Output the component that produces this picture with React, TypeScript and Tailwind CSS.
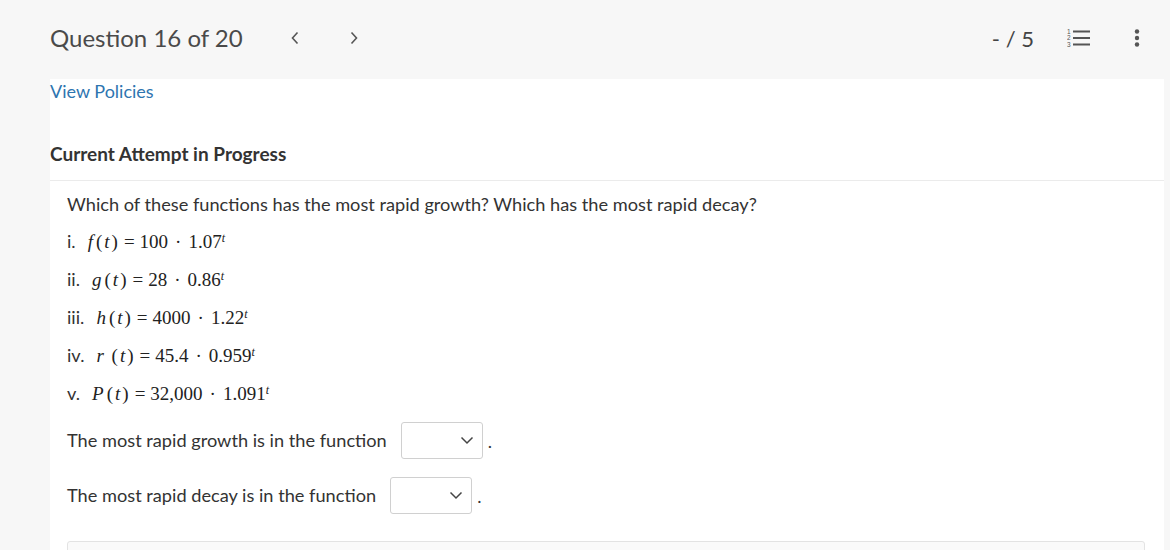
import React from "react"

const lato = { fontFamily: "Lato, 'Open Sans', sans-serif" }

function Chevron({ dir }: { dir: "left" | "right" }) {
  return (
    <svg width="10" height="14" viewBox="0 0 10 14" className="text-[#555]">
      {dir === "left" ? (
        <path d="M7.5 1.5 L2.5 7 L7.5 12.5" fill="none" stroke="currentColor" strokeWidth="1.6" />
      ) : (
        <path d="M2.5 1.5 L7.5 7 L2.5 12.5" fill="none" stroke="currentColor" strokeWidth="1.6" />
      )}
    </svg>
  )
}

function NumberedList() {
  return (
    <svg width="24" height="20" viewBox="0 0 24 20" className="text-[#555]">
      <text x="0" y="5.5" fontSize="6.5" fill="currentColor" fontFamily="Liberation Sans, sans-serif">1</text>
      <text x="0" y="12" fontSize="6.5" fill="currentColor" fontFamily="Liberation Sans, sans-serif">2</text>
      <text x="0" y="18.5" fontSize="6.5" fill="currentColor" fontFamily="Liberation Sans, sans-serif">3</text>
      <rect x="6" y="2.5" width="17" height="2" fill="currentColor" />
      <rect x="6" y="9" width="17" height="2" fill="currentColor" />
      <rect x="6" y="15.5" width="17" height="2" fill="currentColor" />
    </svg>
  )
}

function Kebab() {
  return (
    <svg width="6" height="18" viewBox="0 0 6 18" className="text-[#555]">
      <circle cx="3" cy="2.5" r="2.2" fill="currentColor" />
      <circle cx="3" cy="9" r="2.2" fill="currentColor" />
      <circle cx="3" cy="15.5" r="2.2" fill="currentColor" />
    </svg>
  )
}

function Select() {
  return (
    <span className="inline-flex h-[37px] w-[82px] items-center justify-end rounded-[3px] border border-[#d0d0d0] bg-white pr-[8px] align-middle">
      <svg width="14" height="9" viewBox="0 0 14 9" className="text-[#444]">
        <path d="M1.5 1.5 L7 7 L12.5 1.5" fill="none" stroke="currentColor" strokeWidth="1.5" />
      </svg>
    </span>
  )
}

const items = [
  { label: "i.", name: "f", coef: "100", base: "1.07", gap: "" },
  { label: "ii.", name: "g", coef: "28", base: "0.86", gap: "" },
  { label: "iii.", name: "h", coef: "4000", base: "1.22", gap: "" },
  { label: "iv.", name: "r", coef: "45.4", base: "0.959", gap: " " },
  { label: "v.", name: "P", coef: "32,000", base: "1.091", gap: "" },
]

export default function App() {
  return (
    <div className="min-h-[550px] w-[1170px] bg-[#f7f7f7]" style={lato}>
      <div className="flex h-[79px] items-center pb-[3px] pl-[50px] pr-[30px]">
        <span className="text-[24px] text-[#4a4a4a]">Question 16 of 20</span>
        <div className="ml-[47px] flex items-center gap-[49px]">
          <Chevron dir="left" />
          <Chevron dir="right" />
        </div>
        <span className="ml-auto text-[22px] text-[#444]">- / 5</span>
        <div className="ml-[33px]">
          <NumberedList />
        </div>
        <div className="ml-[43px]">
          <Kebab />
        </div>
      </div>
      <div className="ml-[50px] mr-[6px] min-h-[471px] bg-white">
        <div className="text-[18px] leading-[24px] text-[#2e75b0]">View Policies</div>
        <div className="mt-[39px] text-[19px] font-bold leading-[24px] text-[#333]">
          Current Attempt in Progress
        </div>
        <div className="mt-[14px] border-t border-[#ebebeb] px-[17px] pt-[11px] text-[18.2px] text-[#333]">
          <div className="leading-[24px]">
            Which of these functions has the most rapid growth? Which has the most rapid decay?
          </div>
          <div className="mt-[14px] flex flex-col gap-[14px]">
            {items.map((it) => (
              <div key={it.label} className="flex h-[24px] items-center">
                <span className="mr-[12px]">{it.label}</span>
                <span
                  className="text-[19px] text-[#222]"
                  style={{ fontFamily: "'Liberation Serif', 'DejaVu Serif', serif" }}
                >
                  <i>{it.name}</i>
                  {it.gap}
                  <span className="ml-[3px]">(</span>
                  <i className="mx-[2px]">t</i>)
                  <span className="ml-[6px] mr-[5px]">=</span>
                  {it.coef}
                  <span className="mx-[7px]">·</span>
                  {it.base}
                  <sup className="text-[12px]">
                    <i>t</i>
                  </sup>
                </span>
              </div>
            ))}
          </div>
          <div className="mt-[16px] flex items-center">
            <span>The most rapid growth is in the function</span>
            <span className="ml-[14px]">
              <Select />
            </span>
            <span className="ml-[5px] self-end pb-[4px]">.</span>
          </div>
          <div className="mt-[18px] flex items-center">
            <span>The most rapid decay is in the function</span>
            <span className="ml-[14px]">
              <Select />
            </span>
            <span className="ml-[5px] self-end pb-[4px]">.</span>
          </div>
          <div className="mt-[27px] mr-[2px] h-[20px] rounded-t-[3px] border border-[#e3e3e3] bg-[#fafafa]" />
        </div>
      </div>
    </div>
  )
}
